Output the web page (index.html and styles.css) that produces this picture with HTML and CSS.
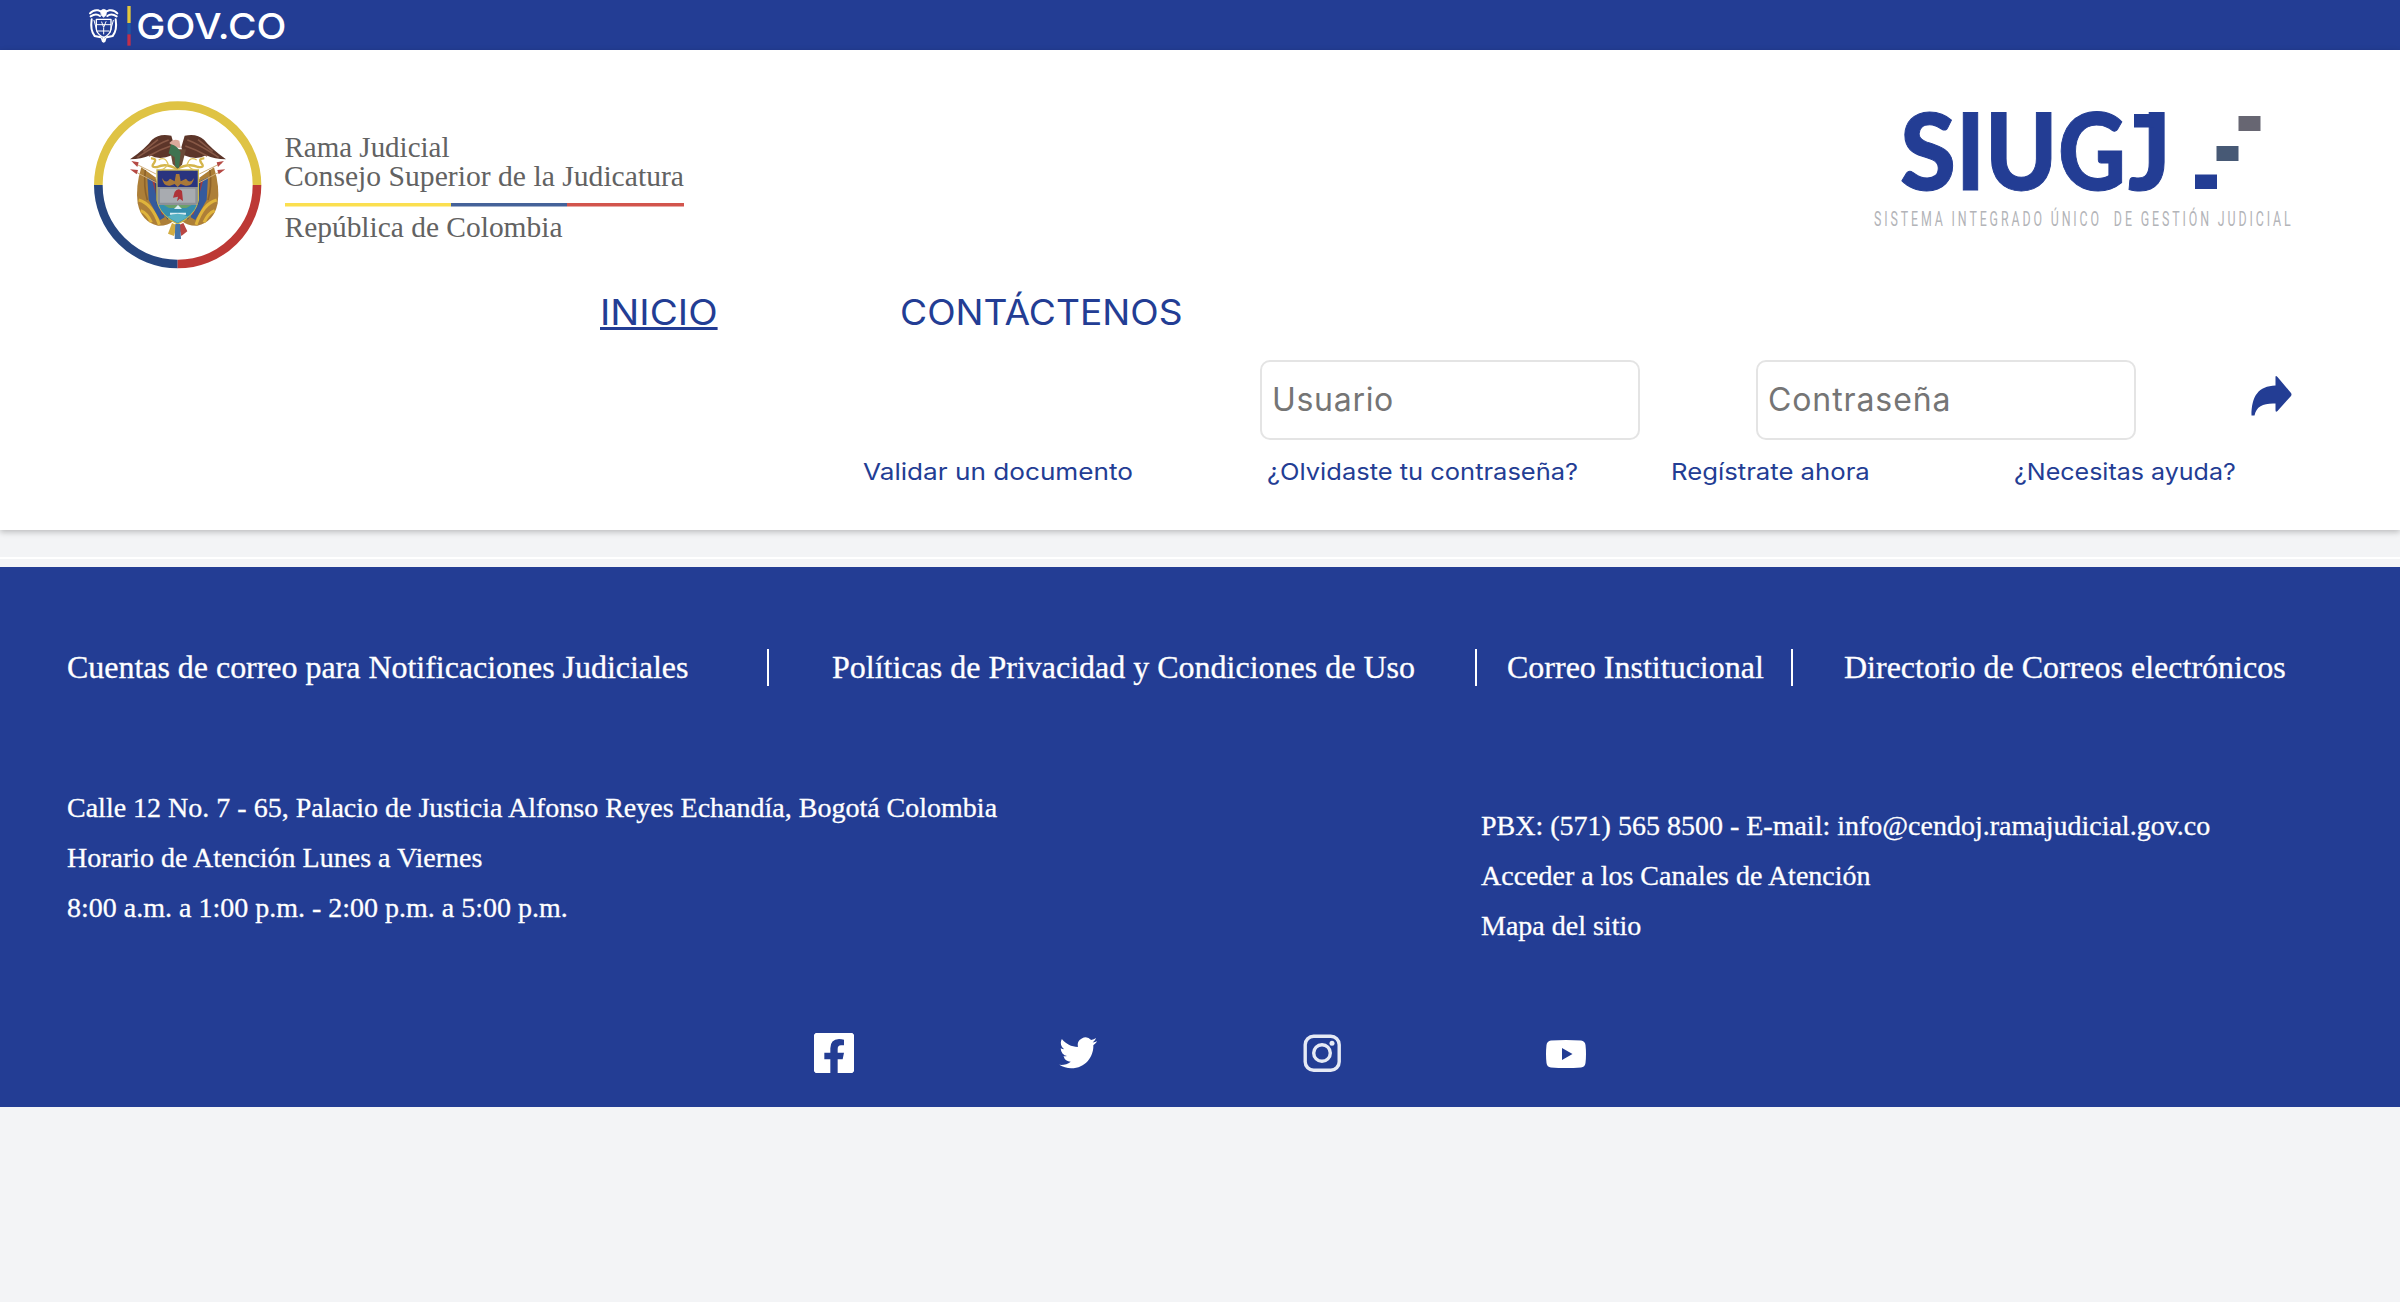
FILE: index.html
```html
<!DOCTYPE html>
<html lang="es">
<head>
<meta charset="utf-8">
<title>SIUGJ - Rama Judicial</title>
<link rel="stylesheet" href="styles.css">
</head>
<body>
<div class="govbar">
  <svg class="govbar-logo" viewBox="0 0 600 150" role="img" aria-label="GOV.CO">
    <g fill="none" stroke="#fff" stroke-width="6" stroke-linecap="round" stroke-linejoin="round">
      <path d="M12 40 Q22 28 37 31 L53 38 L69 31 Q84 28 94 40" />
      <path d="M14 49 Q30 38 42 48 M92 49 Q76 38 64 48" />
      <path d="M44 32 Q53 24 62 32 L60 46 L53 52 L46 46 Z" fill="#fff" stroke-width="2" />
      <path d="M17 58 Q12 91 26 108 L44 112 M89 58 Q94 91 80 108 L62 112" />
      <path d="M31 58 H75 V88 Q72 103 53 113 Q34 103 31 88 Z" stroke-width="4" />
      <path d="M32 74 H74 M37 93 H69 M24 61 L34 97 M82 61 L72 97 M47 66 L53 82 L60 65 M53 84 V102" stroke-width="3" />
      <path d="M53 112 V126 M47 115 L50 124 M59 115 L56 124" stroke-width="5" />
    </g>
    <path d="M124 18h10v51h-10z" fill="#e2c63c" />
    <path d="M124 69h10v34h-10z" fill="#1d57a5" />
    <path d="M124 103h10v34h-10z" fill="#c22f4b" />
    <text class="gov-text" x="151" y="117" textLength="450" lengthAdjust="spacingAndGlyphs">GOV.CO</text>
  </svg>
</div>

<header class="header">
  <div class="brands">
    <svg class="brand-rama" viewBox="0 0 620 190" role="img" aria-label="Rama Judicial">
      <g transform="scale(.33333)">
        <g fill="none" stroke-width="26">
          <path d="M55 285 A238 238 0 0 1 531 285" stroke="#dfc344" />
          <path d="M55 285 A238 237 0 0 0 293 522" stroke="#27467f" />
          <path d="M531 285 A238 237 0 0 1 293 522" stroke="#bd3835" />
        </g>
        <!-- flags -->
        <path d="M184 232 Q166 290 173 340 Q184 396 234 407 Q264 408 280 393 L226 262 Z" fill="#ad7f38" />
        <path d="M402 232 Q420 290 413 340 Q402 396 352 407 Q322 408 306 393 L360 262 Z" fill="#ad7f38" />
        <path d="M176 330 Q216 340 238 404 M182 362 Q202 370 214 397 M410 330 Q370 340 348 404 M404 362 Q384 370 372 397" fill="none" stroke="#dfb43c" stroke-width="9" />
        <path d="M196 240 Q190 290 202 330 M390 240 Q396 290 384 330" fill="none" stroke="#8d632b" stroke-width="5" />
        <path d="M202 262 L224 272 L254 382 L240 390 L206 330 Z M384 262 L362 272 L332 382 L346 390 L380 330 Z" fill="#355a9c" />
        <path d="M216 270 L232 278 L256 366 L246 376 Z M370 270 L354 278 L330 366 L340 376 Z" fill="#a63b3c" />
        <path d="M228 276 L234 340 L266 386 M358 276 L352 340 L320 386" fill="none" stroke="#2c4678" stroke-width="8" />
        <!-- spears -->
        <path d="M160 218 L228 252 M160 242 L232 280 M426 218 L358 252 M426 242 L354 280" stroke="#cfae7a" stroke-width="3" />
        <path d="M154 213 L176 217 L172 231 Z M150 238 L174 240 L170 253 Z M432 213 L410 217 L414 231 Z M436 238 L412 240 L416 253 Z" fill="#b54a45" />
        <!-- shield -->
        <path d="M231 240 H355 V330 Q346 374 293 402 Q240 374 231 330 Z" fill="#8f9399" stroke="#c9b84c" stroke-width="4" />
        <path d="M233 242 H353 V291 H233 Z" fill="#29347f" />
        <path d="M233 291 H353 V343 H233 Z" fill="#8d9197" />
        <path d="M240 296 H346 V338 H240 Z" fill="#a8abb0" />
        <path d="M236 345 H350 Q340 376 293 400 Q246 376 236 345 Z" fill="#358fae" />
        <path d="M251 345 H335 L319 354 H267 Z" fill="#6aa06a" />
        <path d="M282 357 L294 345 L306 357 Z M270 368 H318 V374 H270 Z" fill="#d8edf2" />
        <path d="M262 380 Q293 362 324 380 L293 398 Z" fill="#58b2c4" />
        <path d="M246 264 Q258 284 270 266 L284 274 L288 252 H298 L302 274 L318 266 Q330 284 342 264 Q338 290 316 287 L302 282 L293 291 L284 282 L270 287 Q250 290 246 264 Z" fill="#a97838" />
        <path d="M284 306 Q294 291 306 303 L309 333 L299 326 L291 334 L294 320 L279 323 Z" fill="#ae3338" />
        <!-- ribbon and laurel -->
        <path d="M213 205 Q232 204 222 219 Q210 234 232 231 Q258 218 290 237 Q326 218 354 231 Q376 234 364 219 Q354 204 373 205" fill="none" stroke="#d4b54b" stroke-width="7" />
        <path d="M236 210 Q256 198 264 222 Q254 240 240 239 M350 210 Q330 198 322 222 Q332 240 346 239" fill="none" stroke="#dfc35e" stroke-width="4" />
        <!-- condor -->
        <path d="M274 137 Q238 129 216 149 Q198 174 150 208 Q184 208 210 196 Q238 212 276 196 L284 172 Z" fill="#5c3529" />
        <path d="M314 137 Q350 129 372 149 Q392 174 438 208 Q404 208 378 196 Q350 212 312 196 L304 172 Z" fill="#5c3529" />
        <path d="M266 150 Q236 160 172 202 M272 168 Q240 178 206 198 M322 150 Q352 160 416 202 M316 168 Q348 178 382 198 M234 149 L190 184 M354 149 L398 184" fill="none" stroke="#875846" stroke-width="5" />
        <path d="M270 178 L318 178 L306 224 L292 236 L278 222 Z" fill="#6b4a37" />
        <path d="M268 159 Q280 144 298 152 L302 174 L282 172 Z" fill="#dca99b" />
        <path d="M273 163 Q292 167 302 187 L297 235 L286 230 L284 202 L266 190 Z" fill="#3f7350" />
        <!-- tail -->
        <path d="M276 399 L291 406 L282 438 L264 431 Z" fill="#d3ad42" />
        <path d="M310 399 L295 406 L304 438 L322 424 Z" fill="#b94643" />
        <path d="M286 402 H300 L303 447 H284 Z" fill="#4474a9" />
      </g>
      <g class="rama-text">
        <text x="204.500" y="66.500" textLength="165" lengthAdjust="spacingAndGlyphs">Rama Judicial</text>
        <text x="204" y="96" textLength="400" lengthAdjust="spacingAndGlyphs">Consejo Superior de la Judicatura</text>
        <text x="204.500" y="146.500" textLength="278" lengthAdjust="spacingAndGlyphs">República de Colombia</text>
      </g>
      <path d="M205 113h166v3.500h-166z" fill="#fbdf4f" />
      <path d="M371 113h116v3.500h-116z" fill="#456299" />
      <path d="M487 113h117v3.500h-117z" fill="#d2544c" />
    </svg>

    <svg class="brand-siugj" viewBox="0 -30 430 180" role="img" aria-label="SIUGJ">
      <g class="siugj-text">
        <text x="30" y="90" textLength="56" lengthAdjust="spacingAndGlyphs">S</text>
        <text x="86" y="90" textLength="29" lengthAdjust="spacingAndGlyphs">I</text>
        <text x="115" y="90" textLength="72.500" lengthAdjust="spacingAndGlyphs">U</text>
        <text x="188" y="90" textLength="68" lengthAdjust="spacingAndGlyphs">G</text>
        <text x="258" y="90" textLength="43" lengthAdjust="spacingAndGlyphs">J</text>
      </g>
      <path d="M264 14h20v13.500h-20z" fill="#233d94" />
      <path d="M325 74.500h22v14.500h-22z" fill="#233d94" />
      <path d="M346.500 46h22v15h-22z" fill="#475975" />
      <path d="M368.500 16h22v15h-22z" fill="#676672" />
      <text class="siugj-tag" transform="translate(4 125.500) scale(.62 1)" textLength="672" lengthAdjust="spacing">SISTEMA INTEGRADO ÚNICO&nbsp; DE GESTIÓN JUDICIAL</text>
    </svg>
  </div>

  <nav class="nav">
    <a class="nav-home">INICIO</a>
    <a class="nav-contact">CONTÁCTENOS</a>
  </nav>

  <form class="login">
    <input class="field field-user" type="text" placeholder="Usuario">
    <input class="field field-pass" type="password" placeholder="Contraseña">
    <svg class="enter" viewBox="0 0 40 40" role="img" aria-label="Entrar">
      <path d="M0 39.500 C0 20 7 10 24 9.500 V1 Q24 -1 26 1 L39.500 17 Q40.500 18.500 39.500 20 L26 35 Q24 37 24 34 V27.500 C12 27 5 30 3 39.500 Z" fill="#233d94" />
    </svg>
  </form>

  <div class="help">
    <a class="help-doc">Validar un documento</a>
    <a class="help-pass">¿Olvidaste tu contraseña?</a>
    <a class="help-reg">Regístrate ahora</a>
    <a class="help-help">¿Necesitas ayuda?</a>
  </div>
</header>

<div class="strip"></div>

<footer class="footer">
  <div class="policies">
    <a class="policies-first">Cuentas de correo para Notificaciones Judiciales</a>
    <a class="ruled ruled-wide">Políticas de Privacidad y Condiciones de Uso</a>
    <a class="ruled ruled-narrow">Correo Institucional</a>
    <a class="ruled ruled-mid">Directorio de Correos electrónicos</a>
  </div>
  <div class="contact">
    <div>
      <p>Calle 12 No. 7 - 65, Palacio de Justicia Alfonso Reyes Echandía, Bogotá Colombia</p>
      <p>Horario de Atención Lunes a Viernes</p>
      <p>8:00 a.m. a 1:00 p.m. - 2:00 p.m. a 5:00 p.m.</p>
    </div>
    <div class="contact-right">
      <p>PBX: (571) 565 8500 - E-mail: info@cendoj.ramajudicial.gov.co</p>
      <p>Acceder a los Canales de Atención</p>
      <p>Mapa del sitio</p>
    </div>
  </div>
  <div class="social">
    <svg viewBox="0 0 120 120" role="img" aria-label="Facebook">
      <path fill="#fff" d="M5 0H115L120 5V115L115 120H71V79H86L90 59H71V48Q71 37 81 37H90V20Q84 18 75 18Q49 19 49 46V59H31V79H49V120H5L0 115V5Z" />
    </svg>
    <svg viewBox="-.8 -.6 25.300 25.300" role="img" aria-label="Twitter">
      <path fill="#fff" d="M23.953 4.570a10 10 0 01-2.825.775 4.958 4.958 0 002.163-2.723c-.951.555-2.005.959-3.127 1.184a4.920 4.920 0 00-8.384 4.482C7.690 8.095 4.067 6.130 1.640 3.162a4.822 4.822 0 00-.666 2.475c0 1.710.870 3.213 2.188 4.096a4.904 4.904 0 01-2.228-.616v.060a4.923 4.923 0 003.946 4.827 4.996 4.996 0 01-2.212.085 4.936 4.936 0 004.604 3.417 9.867 9.867 0 01-6.102 2.105c-.390 0-.779-.023-1.170-.067a13.995 13.995 0 007.557 2.209c9.053 0 13.998-7.496 13.998-13.985 0-.210 0-.420-.015-.630A9.935 9.935 0 0024 4.590z" />
    </svg>
    <svg viewBox="0 0 40 40" role="img" aria-label="Instagram">
      <g fill="none" stroke="#e6eaf5" stroke-width="3.400">
        <rect x="3.200" y="3.200" width="34" height="34" rx="8.500" />
        <circle cx="20" cy="20" r="8.300" />
      </g>
      <circle cx="30" cy="10.300" r="2.500" fill="#e6eaf5" />
    </svg>
    <svg viewBox="0 0 40 40" role="img" aria-label="YouTube">
      <path fill="#fff" fill-rule="evenodd" d="M5 7.500Q20 6.500 35 7.500Q39 8 39.500 12Q40.500 21 39.500 30Q39 34 35 34.500Q20 35.500 5 34.500Q1 34 .5 30Q-.5 21 .5 12Q1 8 5 7.500ZM16 15V27L26.500 21Z" />
    </svg>
  </div>
</footer>
</body>
</html>
```
FILE: styles.css
```css
* { box-sizing: border-box; }

body {
  margin: 0;
  background: #f3f4f6;
  font-family: Inter, "Open Sans", sans-serif;
  color: #233d94;
}

svg { display: block; flex: none; }

.govbar {
  height: 50px;
  padding-left: 86px;
  background: #233d94;
}
.govbar-logo { width: 200px; height: 50px; }
.gov-text { font: 500 108px Inter, sans-serif; fill: #fff; }

.header {
  height: 480px;
  background: #fff;
  box-shadow: 0 2px 6px rgba(0, 0, 0, .24);
}

.brands {
  display: flex;
  justify-content: space-between;
  height: 230px;
  padding: 20px 100px 0 80px;
}
.brand-rama { width: 620px; height: 190px; margin-top: 20px; }
.brand-siugj { width: 430px; height: 180px; }
.rama-text { font: 29px "Liberation Serif", serif; fill: #626262; }
.siugj-text {
  font: 900 106px Lato, sans-serif;
  fill: #233d94;
  stroke: #233d94;
  stroke-width: 1;
}
.siugj-tag { font: 20px Roboto, sans-serif; fill: #b3b4b8; }

.nav {
  display: flex;
  padding-left: 600px;
  font-size: 35px;
  line-height: 64px;
}
.nav a, .help a {
  transform-origin: left center;
  white-space: nowrap;
}
.nav-home {
  width: 300px;
  transform: scaleX(1.1);
  text-decoration: underline;
  text-decoration-thickness: 3px;
  text-underline-offset: 2px;
  text-decoration-skip-ink: none;
}
.nav-contact { transform: scaleX(1.062); }

.login {
  display: flex;
  margin-top: 16px;
  padding-left: 1260px;
}
.field {
  width: 380px;
  height: 80px;
  padding: 0 10px 2px;
  border: 2px solid #e4e4e4;
  border-radius: 10px;
  background: #fff;
  font: 32px Inter, sans-serif;
}
.field::placeholder { color: #757575; }
.field-user { letter-spacing: .7px; }
.field-pass { margin-left: 116px; letter-spacing: .9px; }
.enter { width: 41px; height: 40px; margin: 16px 0 0 115px; }

.help {
  display: grid;
  grid-template-columns: 404px 404px 343px 208px;
  padding-left: 863px;
  font-size: 23.5px;
  line-height: 63px;
}
.help a { justify-self: start; }
.help-doc { transform: scaleX(1.113); }
.help-pass { transform: scaleX(1.084); }
.help-reg { transform: scaleX(1.094); }
.help-help { transform: scaleX(1.065); }

.strip {
  height: 29px;
  margin-bottom: 8px;
  border-bottom: 2px solid #fff;
}

.footer {
  height: 540px;
  padding-top: 82px;
  background: #233d94;
  color: #fff;
  font-family: "Liberation Serif", serif;
  -webkit-text-stroke: .3px #fff;
}
.policies {
  display: grid;
  grid-template-columns: 700px 708px 316px auto;
  padding-left: 67px;
  font-size: 32px;
  line-height: 37px;
}
.policies-first { letter-spacing: -.03px; }
.ruled { border-left: 2px solid #fff; }
.ruled-wide { padding-left: 63px; }
.ruled-narrow { padding-left: 30px; }
.ruled-mid { padding-left: 51px; }

.contact {
  display: grid;
  grid-template-columns: 1414px auto;
  margin-top: 97px;
  padding-left: 67px;
  font-size: 28px;
  line-height: 50px;
}
.contact p { margin: 0; }
.contact-right { padding-top: 18px; }

.social {
  display: flex;
  justify-content: center;
  gap: 204px;
  margin-top: 82px;
}
.social svg { width: 40px; height: 40px; }
```
